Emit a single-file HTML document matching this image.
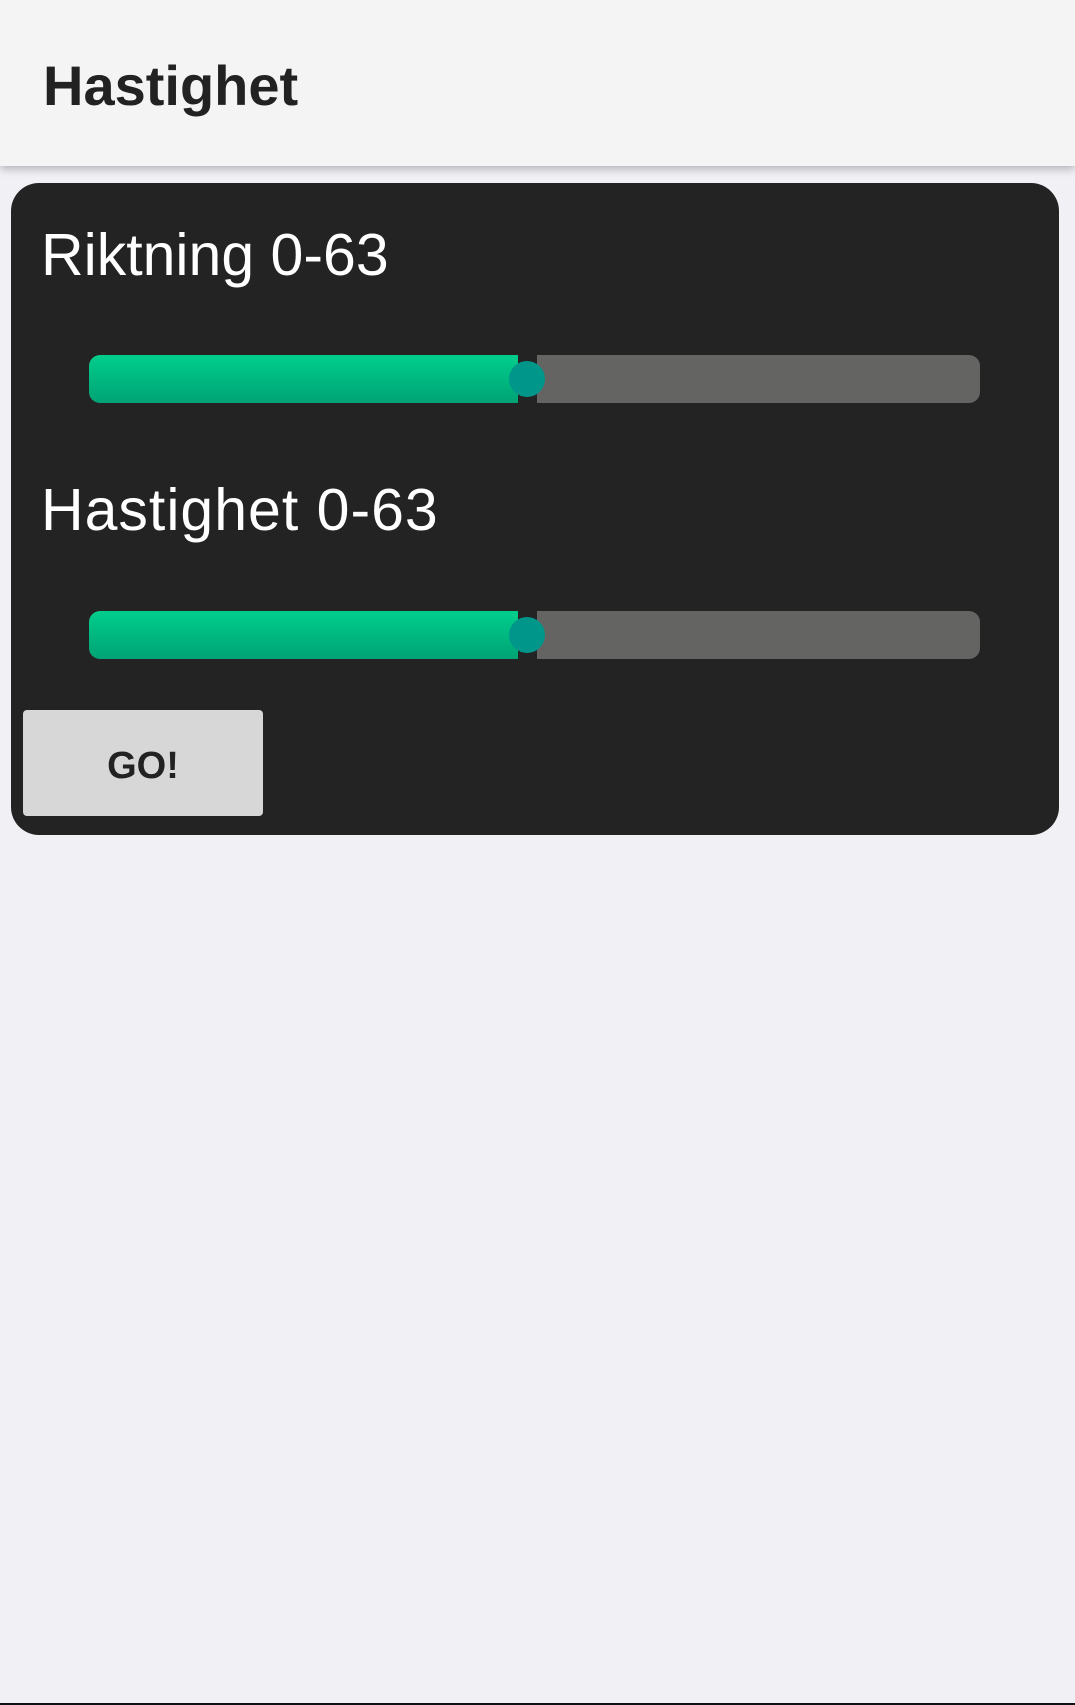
<!DOCTYPE html>
<html><head><meta charset="utf-8"><style>
html,body{margin:0;padding:0}
body{width:1075px;height:1705px;background:#f0f0f5;position:relative;overflow:hidden;font-family:"Liberation Sans",sans-serif}
.hdr{position:absolute;left:0;top:0;width:1075px;height:166px;background:#f4f4f4;box-shadow:0 3px 8px rgba(0,0,0,.25)}
.hdr span{position:absolute;left:43px;top:58px;font-size:56px;font-weight:bold;color:#222;line-height:1;}
.card{position:absolute;left:11px;top:183px;width:1048px;height:652px;background:#232323;border-radius:28px}
.lbl{position:absolute;left:41px;font-size:59px;color:#fff;line-height:1}
.tr{position:absolute;left:89px;width:891px;height:48px;border-radius:11px;background:#646562;overflow:hidden}
.fill{position:absolute;left:0;top:0;width:429px;height:48px;background:linear-gradient(#00ce8c,#00a375);border-radius:11px 0 0 11px}
.gap{position:absolute;left:429px;top:0;width:19px;height:48px;background:#232323}
.th{position:absolute;width:36px;height:36px;border-radius:50%;background:#00968a}
.btn{position:absolute;left:23px;top:710px;width:240px;height:106px;background:#d6d7d6;border-radius:4px;text-align:center;line-height:112px;font-size:38px;font-weight:bold;color:#222}
.bl{position:absolute;left:0;bottom:0;width:1075px;height:2px;background:#111}
</style></head><body>
<div class="hdr"><span>Hastighet</span></div>
<div class="card"></div>
<div class="lbl" style="top:226px">Riktning 0-63</div>
<div class="tr" style="top:355px"><div class="fill"></div><div class="gap"></div></div>
<div class="th" style="left:509px;top:361px"></div>
<div class="lbl" style="top:481px;letter-spacing:1px">Hastighet 0-63</div>
<div class="tr" style="top:611px"><div class="fill"></div><div class="gap"></div></div>
<div class="th" style="left:509px;top:617px"></div>
<div class="btn">GO!</div>
<div class="bl"></div>
</body></html>
